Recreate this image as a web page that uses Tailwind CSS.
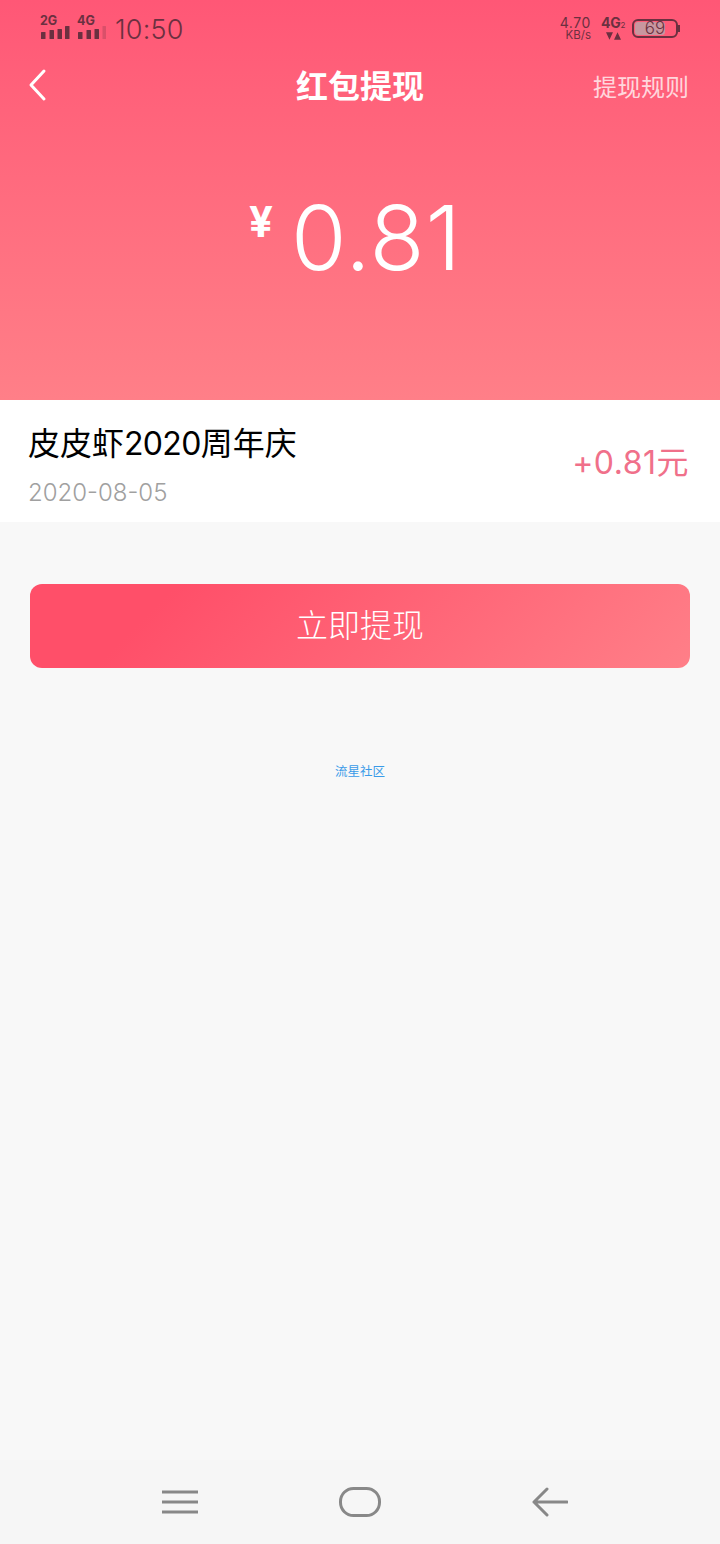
<!DOCTYPE html>
<html lang="zh-CN">
<head>
  <meta charset="UTF-8">
  <meta name="viewport" content="width=device-width, initial-scale=1.0">
  <title>红包提现</title>
  <script src="https://cdn.jsdelivr.net/npm/@tailwindcss/browser@4"></script>
</head>
<body class="bg-[#f8f8f8] font-['Inter','Noto_Sans_CJK_SC',sans-serif]">
  <div class="flex flex-col w-[720px] h-[1544px] overflow-hidden">
    <!-- Header -->
    <header class="h-[400px] shrink-0 bg-gradient-to-b from-[#ff5776] to-[#ff7f88] flex flex-col">
      <!-- Status bar -->
      <div class="h-[58px] shrink-0 flex items-center justify-between pl-[40px] pr-[40px] text-[#6b3040]">
        <div class="flex items-center">
          <svg width="30" height="26" viewBox="0 0 30 26" fill="currentColor" class="-mt-[4px]">
            <text x="0" y="11" font-size="12.5" font-weight="700" font-family="Inter">2G</text>
            <rect x="1" y="18" width="4.5" height="7" rx="0.5"/><rect x="9.5" y="16" width="4.5" height="9" rx="0.5"/><rect x="17.5" y="15" width="4.5" height="10" rx="0.5"/><rect x="25" y="12" width="4.5" height="13" rx="0.5"/>
          </svg>
          <svg width="30" height="26" viewBox="0 0 30 26" class="ml-[7px] -mt-[4px]" fill="currentColor">
            <text x="0" y="11" font-size="12.5" font-weight="700" font-family="Inter">4G</text>
            <rect x="1" y="18" width="4.5" height="7" rx="0.5"/><rect x="9.5" y="16" width="4.5" height="9" rx="0.5"/><rect x="17.5" y="15" width="4.5" height="10" rx="0.5"/><rect x="25.5" y="12" width="3.5" height="13" rx="0.5" opacity="0.25"/>
          </svg>
          <span class="ml-[8px] text-[27px] leading-none font-light tracking-[0.2px]">10:50</span>
        </div>
        <div class="flex items-center -mt-[2px]">
          <div class="flex flex-col items-end">
            <span class="text-[14px] leading-[13px] tracking-[0.6px]">4.70</span>
            <span class="text-[11.5px] leading-[12px]">KB/s</span>
          </div>
          <div class="ml-[10px] flex flex-col items-center">
            <span class="text-[14px] leading-[14px] font-bold tracking-[-0.3px]">4G<span class="text-[8px] font-normal">2</span></span>
            <svg width="15" height="8" viewBox="0 0 14 7" fill="currentColor"><path d="M0 0h6.500L3.250 7zM7.500 7h6.500l-3.250-7z"/></svg>
          </div>
          <div class="ml-[7px] flex items-center">
            <div class="w-[46px] h-[19px] rounded-[6px] border-2 border-[#6b3040] p-[1px] relative overflow-hidden flex items-center">
              <div class="w-[30px] h-full bg-[#c8969f] rounded-[3px]"></div>
              <span class="absolute inset-0 flex items-center justify-center text-[17px] leading-none font-light">69</span>
            </div>
            <div class="w-[2px] h-[7px] bg-[#6b3040]"></div>
          </div>
        </div>
      </div>
      <!-- Title row -->
      <div class="h-[58px] shrink-0 flex items-center justify-between pl-[28px] pr-[32px] relative">
        <svg width="20" height="34" viewBox="0 0 20 34" fill="none" stroke="white" stroke-width="3" stroke-linecap="round" stroke-linejoin="round" class="-mt-[5px]"><path d="M16 3 3 17l13 14"/></svg>
        <h1 class="absolute inset-0 flex items-center justify-center text-[32px] font-bold text-white">红包提现</h1>
        <span class="text-[24px] text-white/75 mt-[2px] -mr-[1px]">提现规则</span>
      </div>
      <!-- Amount -->
      <div class="flex justify-center items-start mt-[79px] text-white pr-[9px]">
        <span class="text-[42px] font-bold leading-none mr-[18px] mt-[6px]">¥</span>
        <span class="text-[90px] font-light leading-none tracking-[1px] -mt-[2px]">0.81</span>
      </div>
    </header>

    <!-- Record row -->
    <section class="h-[122px] shrink-0 bg-white flex items-center justify-between pl-[28px] pr-[31px]">
      <div class="mt-[10px]">
        <div class="text-[32px] leading-[40px] text-black">皮皮虾<span class="tracking-[-0.7px]">2020</span>周年庆</div>
        <div class="text-[24px] leading-[30px] mt-[14px] text-[#a0a0a0] font-light">2020-08-05</div>
      </div>
      <div class="text-[32px] text-[#f0708a] mt-[4px] tracking-[0.5px]">+0.81元</div>
    </section>

    <!-- Button -->
    <div class="px-[30px] mt-[62px]">
      <button class="w-full h-[84px] rounded-[12px] bg-[linear-gradient(135deg,#ff4f69_20%,#ff7f88_100%)] text-white text-[32px] font-light">立即提现</button>
    </div>

    <div class="mt-[96px] text-center text-[12.5px] leading-[16px] text-[#3a9be8]">流星社区</div>

    <!-- Nav bar -->
    <nav class="mt-auto h-[84px] shrink-0 bg-[#f6f6f6] flex items-center text-[#888]">
      <svg width="36" height="26" viewBox="0 0 36 26" fill="none" stroke="currentColor" stroke-width="3" class="ml-[162px]"><path d="M0 3h36M0 13h36M0 23h36"/></svg>
      <svg width="42" height="30" viewBox="0 0 42 30" fill="none" stroke="currentColor" stroke-width="3" class="ml-[141px]"><rect x="1.5" y="1.5" width="39" height="27" rx="13"/></svg>
      <svg width="36" height="30" viewBox="0 0 36 30" fill="none" stroke="currentColor" stroke-width="3" stroke-linecap="round" stroke-linejoin="round" class="ml-[151px]"><path d="M35 15H2M15 2 2 15l13 13"/></svg>
    </nav>
  </div>
</body>
</html>
